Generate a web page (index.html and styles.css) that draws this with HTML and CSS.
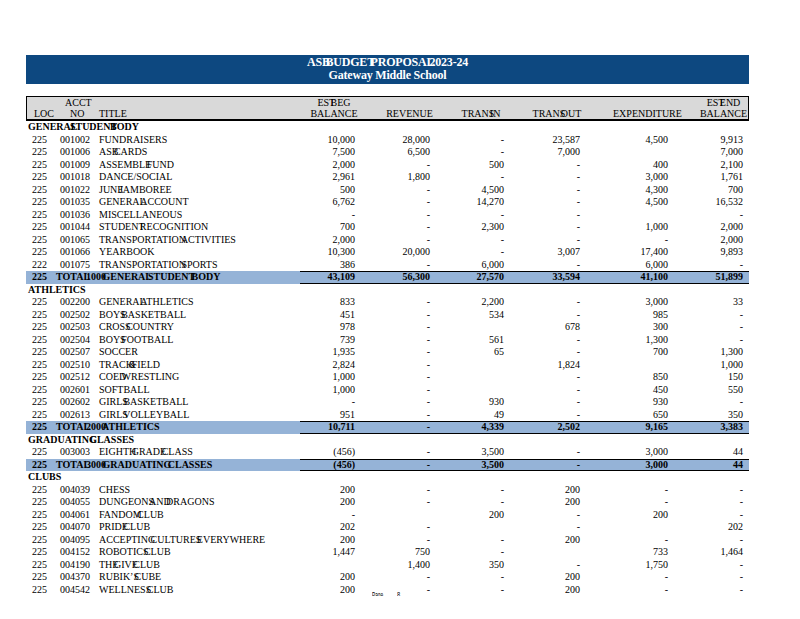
FILE: index.html
```html
<!DOCTYPE html>
<html>
<head>
<meta charset="utf-8">
<title>ASB Budget Proposal 2023-24</title>
<link rel="stylesheet" href="styles.css">
</head>
<body>
<div class="page">
  <div class="banner">
    <div class="banner-l1">ASB BUDGET PROPOSAL 2023-24</div>
    <div class="banner-l2">Gateway Middle School</div>
  </div>

  <div class="colhead">
    <div class="hrow">
      <span class="h-loc"></span><span class="h-acct">ACCT</span><span></span>
      <span class="h4">EST BEG</span><span></span><span></span><span></span><span></span>
      <span class="h9">EST END</span>
    </div>
    <div class="hrow">
      <span class="h-loc">LOC</span><span class="h-no">NO</span><span class="h-title">TITLE</span>
      <span class="h4">BALANCE</span><span class="h5">REVENUE</span><span class="h6">TRANS IN</span>
      <span class="h7">TRANS OUT</span><span class="h8">EXPENDITURE</span><span class="h9">BALANCE</span>
    </div>
  </div>

  <div class="sec">GENERAL STUDENT BODY</div>
  <div class="r"><span class="loc">225</span><span class="acct">001002</span><span class="ttl">FUNDRAISERS</span><span class="n">10,000</span><span class="n">28,000</span><span class="n">-</span><span class="n">23,587</span><span class="n">4,500</span><span class="n e">9,913</span></div>
  <div class="r"><span class="loc">225</span><span class="acct">001006</span><span class="ttl">ASB CARDS</span><span class="n">7,500</span><span class="n">6,500</span><span class="n">-</span><span class="n">7,000</span><span class="n"></span><span class="n e">7,000</span></div>
  <div class="r"><span class="loc">225</span><span class="acct">001009</span><span class="ttl">ASSEMBLE FUND</span><span class="n">2,000</span><span class="n">-</span><span class="n">500</span><span class="n">-</span><span class="n">400</span><span class="n e">2,100</span></div>
  <div class="r"><span class="loc">225</span><span class="acct">001018</span><span class="ttl">DANCE/SOCIAL</span><span class="n">2,961</span><span class="n">1,800</span><span class="n">-</span><span class="n">-</span><span class="n">3,000</span><span class="n e">1,761</span></div>
  <div class="r"><span class="loc">225</span><span class="acct">001022</span><span class="ttl">JUNE JAMBOREE</span><span class="n">500</span><span class="n">-</span><span class="n">4,500</span><span class="n">-</span><span class="n">4,300</span><span class="n e">700</span></div>
  <div class="r"><span class="loc">225</span><span class="acct">001035</span><span class="ttl">GENERAL ACCOUNT</span><span class="n">6,762</span><span class="n">-</span><span class="n">14,270</span><span class="n">-</span><span class="n">4,500</span><span class="n e">16,532</span></div>
  <div class="r"><span class="loc">225</span><span class="acct">001036</span><span class="ttl">MISCELLANEOUS</span><span class="n">-</span><span class="n">-</span><span class="n">-</span><span class="n">-</span><span class="n"></span><span class="n e">-</span></div>
  <div class="r"><span class="loc">225</span><span class="acct">001044</span><span class="ttl">STUDENT RECOGNITION</span><span class="n">700</span><span class="n">-</span><span class="n">2,300</span><span class="n">-</span><span class="n">1,000</span><span class="n e">2,000</span></div>
  <div class="r"><span class="loc">225</span><span class="acct">001065</span><span class="ttl">TRANSPORTATION ACTIVITIES</span><span class="n">2,000</span><span class="n">-</span><span class="n">-</span><span class="n">-</span><span class="n">-</span><span class="n e">2,000</span></div>
  <div class="r"><span class="loc">225</span><span class="acct">001066</span><span class="ttl">YEARBOOK</span><span class="n">10,300</span><span class="n">20,000</span><span class="n">-</span><span class="n">3,007</span><span class="n">17,400</span><span class="n e">9,893</span></div>
  <div class="r"><span class="loc">222</span><span class="acct">001075</span><span class="ttl">TRANSPORTATION SPORTS</span><span class="n">386</span><span class="n">-</span><span class="n">6,000</span><span class="n">-</span><span class="n">6,000</span><span class="n e">-</span></div>
  <div class="r tot"><span class="loc">225</span><span class="tlabel">TOTAL 1000 GENERAL STUDENT BODY</span><span class="n">43,109</span><span class="n">56,300</span><span class="n">27,570</span><span class="n">33,594</span><span class="n">41,100</span><span class="n e">51,899</span></div>

  <div class="sec">ATHLETICS</div>
  <div class="r"><span class="loc">225</span><span class="acct">002200</span><span class="ttl">GENERAL ATHLETICS</span><span class="n">833</span><span class="n">-</span><span class="n">2,200</span><span class="n">-</span><span class="n">3,000</span><span class="n e">33</span></div>
  <div class="r"><span class="loc">225</span><span class="acct">002502</span><span class="ttl">BOYS BASKETBALL</span><span class="n">451</span><span class="n">-</span><span class="n">534</span><span class="n">-</span><span class="n">985</span><span class="n e">-</span></div>
  <div class="r"><span class="loc">225</span><span class="acct">002503</span><span class="ttl">CROSS COUNTRY</span><span class="n">978</span><span class="n">-</span><span class="n"></span><span class="n">678</span><span class="n">300</span><span class="n e">-</span></div>
  <div class="r"><span class="loc">225</span><span class="acct">002504</span><span class="ttl">BOYS FOOTBALL</span><span class="n">739</span><span class="n">-</span><span class="n">561</span><span class="n">-</span><span class="n">1,300</span><span class="n e">-</span></div>
  <div class="r"><span class="loc">225</span><span class="acct">002507</span><span class="ttl">SOCCER</span><span class="n">1,935</span><span class="n">-</span><span class="n">65</span><span class="n">-</span><span class="n">700</span><span class="n e">1,300</span></div>
  <div class="r"><span class="loc">225</span><span class="acct">002510</span><span class="ttl">TRACK &amp; FIELD</span><span class="n">2,824</span><span class="n">-</span><span class="n"></span><span class="n">1,824</span><span class="n"></span><span class="n e">1,000</span></div>
  <div class="r"><span class="loc">225</span><span class="acct">002512</span><span class="ttl">COED WRESTLING</span><span class="n">1,000</span><span class="n">-</span><span class="n"></span><span class="n">-</span><span class="n">850</span><span class="n e">150</span></div>
  <div class="r"><span class="loc">225</span><span class="acct">002601</span><span class="ttl">SOFTBALL</span><span class="n">1,000</span><span class="n">-</span><span class="n"></span><span class="n">-</span><span class="n">450</span><span class="n e">550</span></div>
  <div class="r"><span class="loc">225</span><span class="acct">002602</span><span class="ttl">GIRLS BASKETBALL</span><span class="n">-</span><span class="n">-</span><span class="n">930</span><span class="n">-</span><span class="n">930</span><span class="n e">-</span></div>
  <div class="r"><span class="loc">225</span><span class="acct">002613</span><span class="ttl">GIRLS VOLLEYBALL</span><span class="n">951</span><span class="n">-</span><span class="n">49</span><span class="n">-</span><span class="n">650</span><span class="n e">350</span></div>
  <div class="r tot"><span class="loc">225</span><span class="tlabel">TOTAL 2000 ATHLETICS</span><span class="n">10,711</span><span class="n">-</span><span class="n">4,339</span><span class="n">2,502</span><span class="n">9,165</span><span class="n e">3,383</span></div>

  <div class="sec">GRADUATING CLASSES</div>
  <div class="r"><span class="loc">225</span><span class="acct">003003</span><span class="ttl">EIGHTH GRADE CLASS</span><span class="n">(456)</span><span class="n">-</span><span class="n">3,500</span><span class="n">-</span><span class="n">3,000</span><span class="n e">44</span></div>
  <div class="r tot"><span class="loc">225</span><span class="tlabel">TOTAL 3000 GRADUATING CLASSES</span><span class="n">(456)</span><span class="n">-</span><span class="n">3,500</span><span class="n">-</span><span class="n">3,000</span><span class="n e">44</span></div>

  <div class="sec">CLUBS</div>
  <div class="r"><span class="loc">225</span><span class="acct">004039</span><span class="ttl">CHESS</span><span class="n">200</span><span class="n">-</span><span class="n">-</span><span class="n">200</span><span class="n">-</span><span class="n e">-</span></div>
  <div class="r"><span class="loc">225</span><span class="acct">004055</span><span class="ttl">DUNGEONS AND DRAGONS</span><span class="n">200</span><span class="n">-</span><span class="n">-</span><span class="n">200</span><span class="n">-</span><span class="n e">-</span></div>
  <div class="r"><span class="loc">225</span><span class="acct">004061</span><span class="ttl">FANDOM CLUB</span><span class="n">-</span><span class="n"></span><span class="n">200</span><span class="n">-</span><span class="n">200</span><span class="n e">-</span></div>
  <div class="r"><span class="loc">225</span><span class="acct">004070</span><span class="ttl">PRIDE CLUB</span><span class="n">202</span><span class="n">-</span><span class="n"></span><span class="n">-</span><span class="n"></span><span class="n e">202</span></div>
  <div class="r"><span class="loc">225</span><span class="acct">004095</span><span class="ttl">ACCEPTING CULTURES EVERYWHERE</span><span class="n">200</span><span class="n">-</span><span class="n">-</span><span class="n">200</span><span class="n">-</span><span class="n e">-</span></div>
  <div class="r"><span class="loc">225</span><span class="acct">004152</span><span class="ttl">ROBOTICS CLUB</span><span class="n">1,447</span><span class="n">750</span><span class="n">-</span><span class="n"></span><span class="n">733</span><span class="n e">1,464</span></div>
  <div class="r"><span class="loc">225</span><span class="acct">004190</span><span class="ttl">THE GIVE CLUB</span><span class="n"></span><span class="n">1,400</span><span class="n">350</span><span class="n">-</span><span class="n">1,750</span><span class="n e">-</span></div>
  <div class="r"><span class="loc">225</span><span class="acct">004370</span><span class="ttl">RUBIK’S CUBE</span><span class="n">200</span><span class="n">-</span><span class="n">-</span><span class="n">200</span><span class="n">-</span><span class="n e">-</span></div>
  <div class="r"><span class="loc">225</span><span class="acct">004542</span><span class="ttl">WELLNESS CLUB</span><span class="n">200</span><span class="n">-</span><span class="n">-</span><span class="n">200</span><span class="n">-</span><span class="n e">-</span></div>

  <div class="pg"><span class="pg-word">Page</span><span class="pg-num">8</span></div>
</div>
</body>
</html>
```
FILE: styles.css
```css
html, body {
  margin: 0;
  padding: 0;
  background: #ffffff;
}

body {
  font-family: "Liberation Serif", "Times New Roman", serif;
  font-size: 10px;
  color: #000000;
}

.page {
  position: relative;
  width: 723px;
  padding: 55px 0 0 26px;
}

.banner {
  background: #0d4880;
  color: #ffffff;
  font-weight: bold;
  font-size: 12px;
  line-height: 13px;
  letter-spacing: -0.2px;
  text-align: center;
  height: 29px;
  box-sizing: border-box;
  padding-top: 1px;
  margin-bottom: 12px;
}

.banner-l1 {
  word-spacing: -7px;
}

.colhead {
  box-sizing: border-box;
  width: 723px;
  height: 25px;
  background: #d9d9d9;
  border: 1px solid #000000;
  border-bottom-width: 2px;
}

.hrow {
  display: grid;
  grid-template-columns: 33px 39px 201px 60px 75px 74px 76px 88px 75px;
  height: 11px;
  line-height: 11px;
  white-space: nowrap;
  word-spacing: -7px;
}

.h-loc { padding-left: 7px; }
.h-acct { padding-left: 5px; }
.h-no { padding-left: 10px; }
.h-title { padding-left: 0; }
.h4 { text-align: center; padding-left: 8px; }
.h5 { text-align: center; padding-left: 24px; }
.h6 { text-align: center; padding-left: 18px; }
.h7 { text-align: center; padding-left: 20px; }
.h8 { text-align: center; padding-left: 28px; }
.h9 { text-align: center; padding-left: 26px; }

.sec {
  height: 12.5px;
  line-height: 12.5px;
  font-weight: bold;
  padding-left: 2px;
  word-spacing: -9.5px;
  white-space: nowrap;
}

.r {
  display: grid;
  grid-template-columns: 34px 39px 201px 60px 75px 74px 76px 88px 76px;
  height: 12.5px;
  line-height: 12.5px;
  white-space: nowrap;
}

.loc {
  padding-left: 6px;
}

.ttl {
  word-spacing: -7px;
}

.n {
  text-align: right;
  padding-right: 5px;
}

.n.e {
  padding-right: 6px;
}

.tot {
  background: #95b3d7;
  font-weight: bold;
}

.tot .n {
  box-sizing: border-box;
  border-top: 1px solid #000000;
  border-bottom: 1px solid #000000;
  line-height: 10.5px;
}

.tlabel {
  grid-column: span 2;
  margin-left: -4px;
  word-spacing: -6px;
}

.pg {
  position: absolute;
  left: 372px;
  top: 590px;
  font-family: "Liberation Sans", Arial, sans-serif;
  font-size: 9.5px;
  line-height: 10px;
  white-space: nowrap;
}

.pg-word {
  display: inline-block;
  transform: scaleX(0.5);
  transform-origin: left center;
}

.pg-num {
  position: absolute;
  left: 25px;
  top: 0;
  display: inline-block;
  transform: scaleX(0.6);
  transform-origin: left center;
}
```
